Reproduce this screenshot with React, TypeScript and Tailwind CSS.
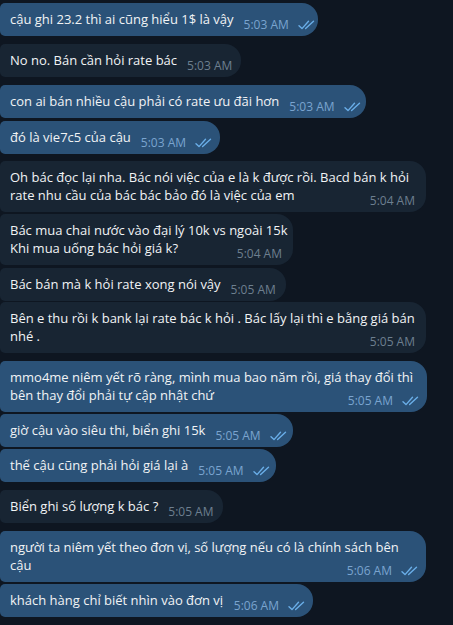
type Msg = {
  lines: string[]
  time: string
  out: boolean
  width: number
  mt: string
}

const MESSAGES: Msg[] = [
  { lines: ['cậu ghi 23.2 thì ai cũng hiểu 1$ là vậy'], time: '5:03 AM', out: true, width: 318, mt: 'mt-0' },
  { lines: ['No no. Bán cần hỏi rate bác'], time: '5:03 AM', out: false, width: 241, mt: 'mt-[8px]' },
  { lines: ['con ai bán nhiều cậu phải có rate ưu đãi hơn'], time: '5:03 AM', out: true, width: 366, mt: 'mt-[8px]' },
  { lines: ['đó là vie7c5 của cậu'], time: '5:03 AM', out: true, width: 220, mt: 'mt-[3px]' },
  {
    lines: [
      'Oh bác đọc lại nha. Bác nói việc của e là k được rồi. Bacd bán k hỏi',
      'rate nhu cầu của bác bác bảo đó là việc của em',
    ],
    time: '5:04 AM',
    out: false,
    width: 426,
    mt: 'mt-[7px]',
  },
  {
    lines: ['Bác mua chai nước vào đại lý 10k vs ngoài 15k', 'Khi mua uống bác hỏi giá k?'],
    time: '5:04 AM',
    out: false,
    width: 293,
    mt: 'mt-[2px]',
  },
  { lines: ['Bác bán mà k hỏi rate xong nói vậy'], time: '5:05 AM', out: false, width: 286, mt: 'mt-[3px]' },
  {
    lines: ['Bên e thu rồi k bank lại rate bác k hỏi . Bác lấy lại thì e bằng giá bán', 'nhé .'],
    time: '5:05 AM',
    out: false,
    width: 426,
    mt: 'mt-[1px]',
  },
  {
    lines: ['mmo4me niêm yết rõ ràng, mình mua bao năm rồi, giá thay đổi thì', 'bên thay đổi phải tự cập nhật chứ'],
    time: '5:05 AM',
    out: true,
    width: 427,
    mt: 'mt-[8px]',
  },
  { lines: ['giờ cậu vào siêu thi, biển ghi 15k'], time: '5:05 AM', out: true, width: 293, mt: 'mt-[2px]' },
  { lines: ['thế cậu cũng phải hỏi giá lại à'], time: '5:05 AM', out: true, width: 276, mt: 'mt-[2px]' },
  { lines: ['Biển ghi số lượng k bác ?'], time: '5:05 AM', out: false, width: 223, mt: 'mt-[8px]' },
  {
    lines: ['người ta niêm yết theo đơn vị, số lượng nếu có là chính sách bên', 'cậu'],
    time: '5:06 AM',
    out: true,
    width: 426,
    mt: 'mt-[8px]',
  },
  { lines: ['khách hàng chỉ biết nhìn vào đơn vị'], time: '5:06 AM', out: true, width: 313, mt: 'mt-[2px]' },
]

function DoubleCheck() {
  return (
    <svg width="17" height="10" viewBox="0 0 17 10" fill="none" className="flex-shrink-0">
      <path d="M1 5.8 L4 8.6 L10.5 1.2" stroke="#6aaee8" strokeWidth="1.4" strokeLinecap="round" strokeLinejoin="round" />
      <path d="M7.6 8.6 L15.5 1.2" stroke="#6aaee8" strokeWidth="1.4" strokeLinecap="round" />
    </svg>
  )
}

function Bubble({ msg }: { msg: Msg }) {
  const last = msg.lines.length - 1
  return (
    <div
      className={`${msg.mt} ${msg.out ? 'bg-[#2b5278]' : 'bg-[#182533]'} rounded-l-[5px] rounded-r-[16px] pl-[10px] pt-[7px] pb-[8px] ${msg.out ? 'pr-[8px]' : 'pr-[11px]'}`}
      style={{ width: msg.width }}
    >
      {msg.lines.map((line, i) =>
        i < last ? (
          <div key={i} className="leading-[18px] whitespace-nowrap">
            {line}
          </div>
        ) : (
          <div key={i} className="flex items-end leading-[18px]">
            <span className="whitespace-nowrap">{line}</span>
            <span
              className={`ml-auto pl-[10px] mb-[-5px] flex items-center gap-[9px] text-[12px] leading-[16px] whitespace-nowrap ${msg.out ? 'text-[#7aa4cf]' : 'text-[#6d7f8f]'}`}
            >
              {msg.time}
              {msg.out && <DoubleCheck />}
            </span>
          </div>
        )
      )}
    </div>
  )
}

export default function App() {
  return (
    <div
      className="min-h-screen w-full bg-[#0e1621] pt-[3px] text-[13px] text-[#f1f3f5] overflow-hidden"
      style={{ fontFamily: '"Open Sans", "Noto Sans", sans-serif' }}
    >
      <div className="flex flex-col items-start">
        {MESSAGES.map((m, i) => (
          <Bubble key={i} msg={m} />
        ))}
      </div>
    </div>
  )
}
